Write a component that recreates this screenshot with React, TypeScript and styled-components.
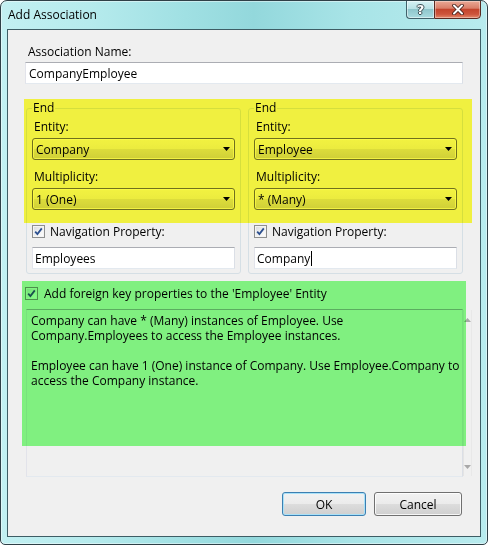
import React from "react";
import styled, { createGlobalStyle } from "styled-components";

const GlobalStyle = createGlobalStyle`
  html, body {
    margin: 0;
    padding: 0;
    background: #ffffff;
  }
  body {
    font-family: "Open Sans", "Noto Sans", sans-serif;
    font-size: 12px;
    color: #000000;
  }
  * {
    box-sizing: border-box;
  }
`;

const Window = styled.div`
  position: relative;
  width: 488px;
  height: 545px;
  border: 1px solid #2f4047;
  border-radius: 7px 7px 5px 5px;
  background: linear-gradient(
    90deg,
    #c2f0f2 0%,
    #b6ebed 18%,
    #a0e0e3 38%,
    #93d8dc 52%,
    #a8e4e7 72%,
    #b8ebee 100%
  );
  box-shadow: inset 0 0 0 1px rgba(255, 255, 255, 0.45);
  display: flex;
  flex-direction: column;
  overflow: hidden;
`;

const TitleBar = styled.div`
  height: 28px;
  display: flex;
  align-items: flex-start;
  flex-shrink: 0;
`;

const Title = styled.div`
  padding: 5px 0 0 7px;
  line-height: 17px;
  font-size: 12px;
  color: #000;
`;

const CaptionButtons = styled.div`
  margin-left: auto;
  margin-right: 6px;
  display: flex;
`;

const HelpButton = styled.div`
  width: 28px;
  height: 19px;
  margin-top: -1px;
  border: 1px solid #40616a;
  border-right: none;
  border-radius: 0 0 0 4px;
  background: linear-gradient(#d6f2f4 0%, #b9e2e6 45%, #8fc6cc 50%, #a9dbe0 100%);
  box-shadow: inset 0 0 0 1px rgba(255, 255, 255, 0.5);
  display: flex;
  align-items: center;
  justify-content: center;
  font-family: "DejaVu Sans", sans-serif;
  font-weight: bold;
  font-size: 13px;
  line-height: 13px;
  color: #ffffff;
  text-shadow: 1px 0 0 #3b4f55, -1px 0 0 #3b4f55, 0 1px 0 #3b4f55, 0 -1px 0 #3b4f55;
`;

const CloseButton = styled.div`
  width: 47px;
  height: 19px;
  margin-top: -1px;
  border: 1px solid #5a2a22;
  border-radius: 0 0 4px 0;
  background: linear-gradient(#eaa996 0%, #da7f69 42%, #c4452d 50%, #cd553c 78%, #e48a6c 100%);
  box-shadow: inset 0 0 0 1px rgba(255, 255, 255, 0.35);
  display: flex;
  align-items: center;
  justify-content: center;
`;

const Client = styled.div`
  margin: 0 6px;
  height: 508px;
  border: 1px solid #3e5d65;
  background: #f0f0f0;
  display: flex;
  flex-direction: column;
  padding: 0 17px;
`;

const Label = styled.div<{ $top: number; $left?: number }>`
  line-height: 16px;
  margin-top: ${(p) => p.$top}px;
  margin-left: ${(p) => p.$left ?? 0}px;
  white-space: nowrap;
`;

const TextBox = styled.div<{ $top: number; $pad?: number }>`
  height: 22px;
  margin-top: ${(p) => p.$top}px;
  border: 1px solid;
  border-color: #abadb3 #dbdfe6 #e3e9ef #e2e3ea;
  background: #ffffff;
  padding-left: ${(p) => p.$pad ?? 3}px;
  display: flex;
  align-items: center;
  white-space: nowrap;
`;

const Caret = styled.span`
  display: inline-block;
  width: 1px;
  height: 15px;
  background: #000;
  margin-left: 1px;
`;

const GroupsRow = styled.div`
  margin-top: 16px;
  margin-left: 1px;
  display: flex;
  gap: 7px;
`;

const GroupBox = styled.fieldset`
  width: 215px;
  margin: 0;
  padding: 0 5px 4px 5px;
  border: 1px solid #d5dfe5;
  border-radius: 3px;
  display: flex;
  flex-direction: column;
  min-width: 0;
`;

const Legend = styled.legend`
  padding: 0 1px;
  line-height: 16px;
`;

const Combo = styled.div<{ $top: number }>`
  height: 22px;
  margin-top: ${(p) => p.$top}px;
  border: 1px solid #707070;
  border-radius: 3px;
  background: linear-gradient(#f2f2f2 0%, #ebebeb 50%, #dddddd 50%, #cfcfcf 100%);
  box-shadow: inset 0 0 0 1px rgba(255, 255, 255, 0.7);
  padding: 0 4px 0 3px;
  display: flex;
  align-items: center;
  justify-content: space-between;
  white-space: nowrap;
`;

const CheckRow = styled.div<{ $top: number; $gap: number }>`
  height: 16px;
  margin-top: ${(p) => p.$top}px;
  display: flex;
  align-items: center;
  gap: ${(p) => p.$gap}px;
  white-space: nowrap;
`;

const CheckBox = styled.span`
  width: 13px;
  height: 13px;
  flex-shrink: 0;
  border: 1px solid #8e8f8f;
  background: linear-gradient(135deg, #d6d9dd 0%, #f3f3f3 60%, #ffffff 100%);
  box-shadow: inset 0 0 0 1px #f4f4f4;
  display: flex;
  align-items: center;
  justify-content: center;
`;

const TextPanel = styled.div`
  margin-top: 8px;
  margin-left: 1px;
  height: 168px;
  border: 1px solid;
  border-color: #abadb3 #dbdfe6 #e3e9ef #e2e3ea;
  background: #f0f0f0;
  display: flex;
`;

const TextBody = styled.div`
  flex: 1;
  padding: 3px 4px;
  line-height: 15px;
`;

const Para = styled.p`
  margin: 0 0 15px 0;
  white-space: nowrap;
`;

const ScrollTrack = styled.div`
  width: 17px;
  border-left: 1px solid #e4e4e4;
  border-right: 1px solid #e8e8e8;
  display: flex;
  flex-direction: column;
  justify-content: space-between;
`;

const ScrollArrow = styled.div`
  height: 19px;
  display: flex;
  align-items: center;
  justify-content: center;
`;

const ButtonRow = styled.div`
  margin-top: 15px;
  margin-right: 1px;
  display: flex;
  justify-content: flex-end;
  gap: 8px;
`;

const Button = styled.div<{ $width: number; $default?: boolean }>`
  width: ${(p) => p.$width}px;
  height: 24px;
  border: 1px solid ${(p) => (p.$default ? "#3c7fb1" : "#707070")};
  border-radius: 3px;
  background: linear-gradient(#f2f2f2 0%, #ebebeb 50%, #dddddd 50%, #cfcfcf 100%);
  box-shadow: inset 0 0 0 1px ${(p) => (p.$default ? "#a9e1f8" : "rgba(255,255,255,0.8)")};
  display: flex;
  align-items: center;
  justify-content: center;
`;

const Highlight = styled.div<{ $color: string; $x: number; $y: number; $w: number; $h: number }>`
  position: absolute;
  left: ${(p) => p.$x}px;
  top: ${(p) => p.$y}px;
  width: ${(p) => p.$w}px;
  height: ${(p) => p.$h}px;
  background: ${(p) => p.$color};
  mix-blend-mode: multiply;
  pointer-events: none;
`;

const DropArrow = () => (
  <svg width="7" height="4" viewBox="0 0 7 4">
    <path d="M0 0 H7 L3.5 4 Z" fill="#000" />
  </svg>
);

const Check = () => (
  <svg width="9" height="9" viewBox="0 0 9 9">
    <path d="M1.2 4.6 L3.4 7 L7.8 1.4" fill="none" stroke="#2c4f8f" strokeWidth="1.8" />
  </svg>
);

const CloseGlyph = () => (
  <svg width="12" height="11" viewBox="0 0 12 11">
    <path d="M2 1.5 L10 9.5 M10 1.5 L2 9.5" stroke="#3a1a14" strokeWidth="3.6" strokeLinecap="round" />
    <path d="M2 1.5 L10 9.5 M10 1.5 L2 9.5" stroke="#ffffff" strokeWidth="2" strokeLinecap="round" />
  </svg>
);

const ScrollGlyph: React.FC<{ up?: boolean }> = ({ up }) => (
  <svg width="7" height="4" viewBox="0 0 7 4">
    <path d={up ? "M0 4 H7 L3.5 0 Z" : "M0 0 H7 L3.5 4 Z"} fill="#a8a8a8" />
  </svg>
);

interface EndProps {
  entity: string;
  multiplicity: string;
  navigation: string;
  focused?: boolean;
}

const EndGroup: React.FC<EndProps> = ({ entity, multiplicity, navigation, focused }) => (
  <GroupBox>
    <Legend>End</Legend>
    <Label $top={3} $left={2}>Entity:</Label>
    <Combo $top={3}>
      <span>{entity}</span>
      <DropArrow />
    </Combo>
    <Label $top={9} $left={2}>Multiplicity:</Label>
    <Combo $top={3}>
      <span>{multiplicity}</span>
      <DropArrow />
    </Combo>
    <CheckRow $top={13} $gap={5}>
      <CheckBox>
        <Check />
      </CheckBox>
      <span>Navigation Property:</span>
    </CheckRow>
    <TextBox $top={8} $pad={2}>
      {navigation}
      {focused && <Caret />}
    </TextBox>
  </GroupBox>
);

const App: React.FC = () => {
  return (
    <>
      <GlobalStyle />
      <Window>
        <TitleBar>
          <Title>Add Association</Title>
          <CaptionButtons>
            <HelpButton>?</HelpButton>
            <CloseButton>
              <CloseGlyph />
            </CloseButton>
          </CaptionButtons>
        </TitleBar>
        <Client>
          <Label $top={14} $left={3}>Association Name:</Label>
          <TextBox $top={2}>CompanyEmployee</TextBox>
          <GroupsRow>
            <EndGroup entity="Company" multiplicity="1 (One)" navigation="Employees" />
            <EndGroup entity="Employee" multiplicity="* (Many)" navigation="Company" focused />
          </GroupsRow>
          <CheckRow $top={11} $gap={6}>
            <CheckBox>
              <Check />
            </CheckBox>
            <span>Add foreign key properties to the 'Employee' Entity</span>
          </CheckRow>
          <TextPanel>
            <TextBody>
              <Para>
                Company can have * (Many) instances of Employee. Use
                <br />
                Company.Employees to access the Employee instances.
              </Para>
              <Para>
                Employee can have 1 (One) instance of Company. Use Employee.Company to
                <br />
                access the Company instance.
              </Para>
            </TextBody>
            <ScrollTrack>
              <ScrollArrow>
                <ScrollGlyph up />
              </ScrollArrow>
              <ScrollArrow>
                <ScrollGlyph />
              </ScrollArrow>
            </ScrollTrack>
          </TextPanel>
          <ButtonRow>
            <Button $width={84} $default>OK</Button>
            <Button $width={88}>Cancel</Button>
          </ButtonRow>
        </Client>
        <Highlight $color="#ffff44" $x={23} $y={98} $w={448} $h={124} />
        <Highlight $color="#88ff88" $x={21} $y={280} $w={444} $h={165} />
      </Window>
    </>
  );
};

export default App;
